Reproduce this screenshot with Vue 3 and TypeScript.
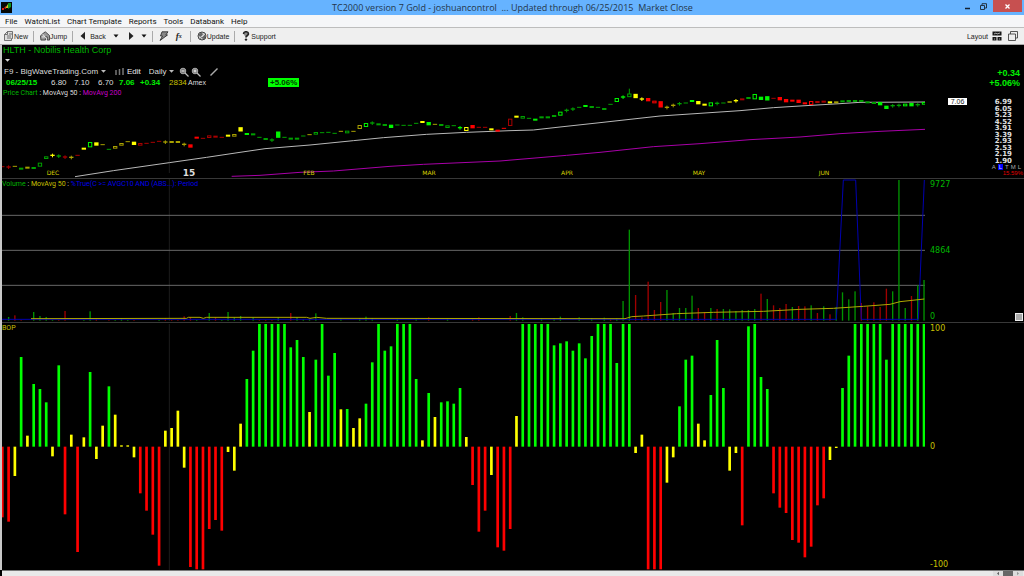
<script setup lang="ts">
interface Candle { x: number; y: number; h: number; w: number; hollow: boolean; wick: number[] | null; color: string }
interface Bar { x: number; y: number; h: number; color: string }

const palette: Record<string, string> = {
  g: '#00f500', G: '#00a000', r: '#ff0000', R: '#a80000', y: '#ffff00', Y: '#a8a000',
}
const barX = (i: number): number => 7 + i * 18.81

const menus = ['File', 'WatchList', 'Chart Template', 'Reports', 'Tools', 'Databank', 'Help']

const candleData =
  'R-245 R+246 Y-244 G=251 Y=248 G=249 GO239 Go218 y+211 G+213 R+216 Y+217 R-211 y=191 gH179 y#177 Y-179 G-193 Yo187 Yo178 ' +
  'Y-170 y#175 Ro178 R-175 R-172 R-169 Y+171 Y=171 Y=171 Y+178 r#183 r=158 R-160 Ro155 R=155 R-157 y=152 Yo151 yM133 g=147 ' +
  'G=148 G-157 G=162 G+165 gB149 G-157 G=161 G=161 G-153 Y-149 Go145 G-143 G-142 G-145 Y-139 Go141 Y-139 YO126 gO120 G+114 ' +
  'G=118 G=120 g#124 G-120 G-121 G-121 G-115 y=111 g#116 Y-118 G=120 Go125 G-122 g+128 yO132 r#125 R-127 R-127 y=133 r=137 ' +
  'r-130 RT112 y=95 Go97 G-100 g=104 G=97 G=97 G=93 gO86 G+76 G+72 G-67 g=63 G=66 G-67 G=72 G-58 gO45 g+36 ' +
  'GW31 yM33 y+42 r#44 ro51 rB58 Y+67 Y+61 G+56 G-54 g=48 y#53 y=59 gO58 G+55 G-54 y-51 y+47 R=43 G=39 ' +
  'gH35 g#40 gM40 R-40 r#41 r#47 r=47 r#49 r=55 rO54 R=51 R=50 y=52 Y=52 G=49 G=48 G=48 G=48 G=52 G=54 ' +
  'g#56 g#67 G+62 G+61 go60 g#59 G+59 go55'

const shapes: Record<string, [number, boolean]> = {
  '-': [3, false], '=': [6, false], '#': [10, false], 'M': [13, false], 'B': [19, false], '+': [4, false],
  'o': [5, true], 'O': [9, true], 'H': [13, true], 'T': [19, true], 'W': [8, true],
}
const candles: Candle[] = candleData.split(' ').map((t, i) => {
  const [h, hollow] = shapes[t[1]]
  const mid = Number(t.slice(2))
  const wick = t[1] === '+' ? [mid - 5, mid + 6] : t[1] === 'W' ? [mid - 20, mid - 4] : null
  const w = hollow ? 10 : 13
  return { x: barX(i) - w / 2, y: mid - h / 2, h, w, hollow, wick, color: palette[t[0]] }
})

const volumeData =
  '1g423 2r418 3r432 5g408 6g420 7g423 8g432 9r432 10r405 13g432 14g406 15r427 17r432 18g432 19g426 20g432 21r432 25g432 26r426 ' +
  '27r432 28r432 29r421 30r424 31g432 33g411 34r424 35g432 36g408 37g424 38g420 40g424 41r432 42r432 43r432 44g424 46r411 47g424 ' +
  '48g430 49g430 50g412 54g428 57g426 58g422 59g426 63g430 66g428 68r424 71g426 75r428 76r424 81r420 82g411 83g424 86g428 88g426 ' +
  '89g422 92g424 94g427 96g425 97r430 98g427 99g375 100g161 101r357 102r424 103r317 104r402 105r378 106g342 107g411 108g396 109g396 ' +
  '110g359 111r396 112r408 113g396 114r399 115g399 116g400 117g405 118g402 119g402 120g399 121r353 122g369 123r388 124r396 ' +
  '125r384 126g393 127r390 128r391 129g388 130r411 131g391 132r415 133g393 134g349 135g370 136g346 137r381 138r391 139r379 ' +
  '140r393 141r338 142g346 143g12 144g396 145r360 146g328 147g312'
const volumes: Bar[] = volumeData.split(' ').map((t) => {
  const m = /^(\d+)([gr])(\d+)$/.exec(t)!
  const top = Number(m[3]) - 9
  return { x: barX(Number(m[1])) - 2, y: top, h: 425 - top, color: m[2] === 'g' ? '#009400' : '#a00000' }
})

const bopData =
  'r592 r605 y468 g111 y347 g192 g207 g247 y409 g136 r583 y344 r696 y352 g156 y417 y317 g199 y284 y376 y376 y412 r520 r572 r644 ' +
  'r737 y332 y324 y272 y443 r741 r748 r748 r627 r600 r632 y396 y452 y311 g177 g92 g12 g12 g12 g12 g12 g82 g60 g111 y276 g119 ' +
  'g12 g167 g99 y268 g267 y324 y295 g251 g127 g12 g92 g79 g12 g12 g12 g177 y361 g219 y291 g247 g244 g251 g204 y351 r495 r635 ' +
  'r572 y465 r682 r692 r627 y288 g12 g12 g12 g12 g12 g76 g70 g64 g92 g70 g115 g48 g12 g12 g12 g129 g12 g12 y399 y344 r748 ' +
  'r748 r748 y488 y412 g259 g119 g107 y311 y361 g225 g60 g204 y452 y399 r616 g19 g12 g171 g207 r520 r563 r579 r660 r668 r712 ' +
  'r680 r556 r535 y420 y384 g204 g107 g12 g12 g12 g12 g12 g119 g12 g12 g12 g12 g12 g12'
const bopBars: Bar[] = bopData.split(' ').map((t, i) => {
  const tip = Number(t.slice(1)) - 9
  const color = { g: '#00ff00', r: '#ff0000', y: '#ffff00' }[t[0]] as string
  return { x: barX(i) - 4, y: Math.min(tip, 371), h: Math.max(3, Math.abs(tip - 371)), color }
})

const months = [
  { label: 'DEC', at: 51 }, { label: '15', at: 187, year: true }, { label: 'FEB', at: 307 }, { label: 'MAR', at: 427 },
  { label: 'APR', at: 565 }, { label: 'MAY', at: 697 }, { label: 'JUN', at: 822 },
]
const scale = ['6.99', '6.05', '5.23', '4.52', '3.91', '3.39', '2.93', '2.53', '2.19', '1.90']
</script>

<template>
  <div class="app">
    <header class="title">
      <svg class="logo" viewBox="0 0 11 11"><rect width="11" height="11" fill="#050805" /><path d="M1 9V6h2v2H1M3 6l2-2v3z" fill="#e02018" /><path d="M5 5l2-3v4H5z" fill="#d8c020" /><path d="M7 1h3v4L7 7z" fill="#109820" /></svg>
      <h1>TC2000 version 7 Gold - joshuancontrol &nbsp;... Updated through 06/25/2015 &nbsp;Market Close</h1>
      <div class="win">
        <button aria-label="Minimize"><svg viewBox="0 0 7 7"><path d="M1 5.500h5" stroke="#123" stroke-width="1.500" /></svg></button>
        <button aria-label="Restore"><svg viewBox="0 0 7 7"><path d="M.5 2.500h4v4h-4zM2 2V.7h4.500V5H5" fill="none" stroke="#234" /></svg></button>
        <button class="close" aria-label="Close"><svg viewBox="0 0 7 7"><path d="M1.500 1.500l4 4M5.500 1.500l-4 4" stroke="#fff" stroke-width="1.300" /></svg></button>
      </div>
    </header>
    <nav class="menu"><button v-for="m in menus" :key="m">{{ m }}</button></nav>
    <div class="tools">
      <button><svg viewBox="0 0 10 10"><path d="M3.500.5h5v7h-1v2h-7v-6zM3.500.5v3h-3M3 5h4M3 7h4M5 3h3" fill="#ddd" stroke="#555" stroke-width=".8" /></svg>New</button>
      <i class="sep"></i>
      <button><svg viewBox="0 0 11 10"><path d="M.5 5L4 1.500l2-1 4.500 4v5H8V6H6v3.500H1z" fill="#999" stroke="#333" stroke-width=".9" /><path d="M3 3l4 5M2 6h3" stroke="#eee" /></svg>Jump</button>
      <i class="sep"></i>
      <button class="back"><svg viewBox="0 0 10 10"><path d="M6 .8v8L1.500 5z" fill="#222" /></svg>Back</button>
      <button class="down" aria-label="Back history"><svg viewBox="0 0 6 6"><path d="M.5 1.500h5L3 4.500z" fill="#111" /></svg></button>
      <button class="down wide" aria-label="Forward"><svg viewBox="0 0 6 8"><path d="M1 0v8l4.500-4z" fill="#222" /></svg></button>
      <button class="down" aria-label="Forward history"><svg viewBox="0 0 6 6"><path d="M.5 1.500h5L3 4.500z" fill="#111" /></svg></button>
      <i class="sep"></i>
      <button aria-label="Alerts"><svg viewBox="0 0 10 10"><path d="M3 .8h6L6.800 4H8.500L1 9.500 3.500 5H1.500z" fill="#888" stroke="#222" stroke-width=".8" /></svg></button>
      <button class="fx" aria-label="Formula"><b>f</b><small>x</small></button>
      <i class="sep"></i>
      <button><svg viewBox="0 0 10 10"><circle cx="5" cy="5" r="4" fill="#ccc" stroke="#444" /><path d="M1.500 4l3-2.500 1 2-2 2zM5 7l3-3v4zM3 8l2-2" fill="#666" stroke="#555" stroke-width=".6" /></svg>Update</button>
      <i class="sep"></i>
      <button><svg viewBox="0 0 8 10"><path d="M1.500 3C1.500 0 6.500 0 6.500 3 6.500 4.500 4 4.500 4 6.500" fill="#888" stroke="#222" stroke-width="1.600" /><circle cx="4" cy="8.600" r="1.200" fill="#222" /></svg>Support</button>
      <div class="layout">
        <button>Layout <svg viewBox="0 0 10 10"><path d="M.5.500h9v4h-9zM.5 6h4v3.500h-4zM5.500 6h4v3.500h-4z" fill="#181818" /><path d="M2 3l2-1 1 1 3-1M2 8h1M7 8h1" stroke="#ccc" stroke-width=".8" fill="none" /></svg></button>
        <button aria-label="Windows"><svg viewBox="0 0 10 10"><path d="M.5 3h7v6.500h-7zM2.500 3V.5h7V7H7.500" fill="#eee" stroke="#444" stroke-width=".9" /></svg></button>
      </div>
    </div>

    <main>
      <section class="panel price">
        <svg class="plot" viewBox="6 -120 2769 399" preserveAspectRatio="none">
          <path d="M508 0V264" stroke="#1c1c1c" stroke-width="3" />
          <polyline class="ma" stroke="#b8b8b8" points="225,275 340,257 508,233 620,217 720,202 795,191 930,180 1060,167 1150,158 1280,148 1400,142 1530,137 1600,135 1680,126 1800,113 1890,103 1980,93 2100,85 2220,77 2320,68 2400,63 2520,56 2580,52 2775,51" />
          <polyline class="ma" stroke="#a800a8" points="695,274 780,271 900,262 1000,258 1170,244 1270,238 1500,228 1700,211 1800,202 1960,185 2100,176 2250,164 2400,156 2520,146 2640,139 2775,133" />
          <template v-for="(c, i) in candles" :key="i">
            <path v-if="c.wick" :d="`M${c.x + c.w / 2} ${c.wick[0]}V${c.wick[1]}`" :stroke="c.color" stroke-width="3" />
            <rect :x="c.x" :y="c.y" :width="c.w" :height="c.h" :fill="c.hollow ? 'none' : c.color" :stroke="c.hollow ? c.color : 'none'" stroke-width="3" />
          </template>
        </svg>
        <div class="info">
          <h2>HLTH - Nobilis Health Corp</h2>
          <button class="caret" aria-label="Symbol menu"><svg viewBox="0 0 5 3"><path d="M0 0h5L2.500 2.800z" fill="#ddd" /></svg></button>
          <div class="controls">
            <select aria-label="Chart template"><option>F9 - BigWaveTrading.Com</option></select>
            <svg class="arrow" viewBox="0 0 5 3"><path d="M0 0h5L2.500 2.800z" fill="#bbb" /></svg>
            <button class="edit"><svg viewBox="0 0 9 7"><path d="M1 2v5M4.500 1v6M8 0v7" stroke="#777" stroke-width="1.500" /></svg>Edit</button>
            <select aria-label="Time frame"><option>Daily</option></select>
            <svg class="arrow" viewBox="0 0 5 3"><path d="M0 0h5L2.500 2.800z" fill="#bbb" /></svg>
            <button class="zoom" aria-label="Zoom out"><svg class="lens" viewBox="0 0 10 10"><circle cx="4" cy="4" r="2.800" fill="#777" stroke="#aaa" /><path d="M2.500 4h3" stroke="#eee" /><path d="M6 6l3.500 3.500" stroke="#bbb" stroke-width="1.300" /></svg></button>
            <button class="zoomin" aria-label="Zoom in"><svg class="lens" viewBox="0 0 10 10"><circle cx="4" cy="4" r="2.800" fill="#777" stroke="#aaa" /><path d="M2.500 4h3M4 2.500v3" stroke="#eee" /><path d="M6 6l3.500 3.500" stroke="#bbb" stroke-width="1.300" /></svg></button>
            <button class="pen" aria-label="Draw line"><svg class="lens" viewBox="0 0 10 10"><path d="M1.500 8.500L8.500 1.500" stroke="#aaa" stroke-width="1.500" /></svg></button>
          </div>
          <div class="quote">
            <b>06/25/15</b><span>6.80</span><span>7.10</span><span>6.70</span><b>7.06</b><b>+0.34</b><span class="yel">2834</span><span class="amex">Amex</span><mark>+5.06%</mark>
          </div>
          <p class="legend"><span class="grn">Price Chart</span> : MovAvg 50 : <span class="mag">MovAvg 200</span></p>
        </div>
        <div class="months">
          <span v-for="m in months" :key="m.label" :class="{ year: m.year }" :style="{ left: (m.at / 9.23) + '%' }">{{ m.label }}</span>
        </div>
        <aside class="axis">
          <div class="change"><b>+0.34</b><b>+5.06%</b></div>
          <span class="last">7.06</span>
          <ol class="scale"><li v-for="s in scale" :key="s">{{ s }}</li></ol>
          <div class="modes"><button>A</button><button class="on">L</button><button>T</button><button>M</button><button>L</button></div>
          <span class="pct">15.59%</span>
        </aside>
      </section>

      <section class="panel volume">
        <svg class="plot" viewBox="6 0 2769 429" preserveAspectRatio="none">
          <path d="M508 0V426" stroke="#1c1c1c" stroke-width="3" />
          <path d="M6 109H2775M6 214H2775M6 319H2775" stroke="#686868" stroke-width="3" />
          <rect v-for="(v, i) in volumes" :key="i" :x="v.x" :y="v.y" width="4" :height="v.h" :fill="v.color" />
          <polyline class="ma" stroke="#0000b0" points="6,421 2509,421 2530,3 2567,3 2584,421 2755,421 2773,3" />
          <polyline class="ma" stroke="#b0a800" points="93,419 560,418 565,415 600,415 610,418 620,415 920,415 930,418 950,415 980,418 1800,419 1875,419 1895,413 1930,411 2030,404 2140,400 2290,397 2400,391 2500,388 2590,382 2670,376 2700,368 2773,360" />
        </svg>
        <p class="legend over"><span class="grn">Volume</span> : <span class="yel">MovAvg 50</span> : <span class="blu">%True(C &gt;= AVGC10 AND (ABS...): Period</span></p>
        <aside class="axis spread grn"><span>9727</span><span>4864</span><span>0</span></aside>
        <button class="knob" aria-label="Resize panel"></button>
      </section>

      <section class="panel bop">
        <svg class="plot" viewBox="6 0 2769 741" preserveAspectRatio="none">
          <path d="M508 3V741" stroke="#1c1c1c" stroke-width="3" />
          <rect v-for="(b, i) in bopBars" :key="i" :x="b.x" :y="b.y" width="8" :height="b.h" :fill="b.color" />
        </svg>
        <p class="legend over yel">BOP</p>
        <aside class="axis spread yel"><span>100</span><span>0</span><span>-100</span></aside>
      </section>
    </main>
    <footer>
      <button aria-label="Scroll left"><svg viewBox="0 0 8 6"><path d="M5 1v4L3 3z" fill="#444" /></svg></button>
      <i class="thumb"></i>
      <button aria-label="Scroll right"><svg viewBox="0 0 8 6"><path d="M3 1v4l2-2z" fill="#888" /></svg></button>
    </footer>
  </div>
</template>

<style>
body { background: #000; }
</style>

<style scoped>
* { box-sizing: border-box; margin: 0; padding: 0; }
.app { display: flex; flex-direction: column; height: 100vh; overflow: hidden; font-family: "Liberation Sans", Arial, sans-serif; font-size: 8px; color: #ddd; background: #000; }
button, select { font: inherit; color: inherit; background: none; border: 0; display: flex; align-items: center; white-space: nowrap; }
select { appearance: none; }
svg { display: block; }
.title { display: grid; grid-template-columns: 1fr auto 1fr; align-items: center; height: 15px; padding-left: 1px; background: #66b3ff; }
.logo { width: 11px; height: 11px; }
h1 { font: 9px "Open Sans", "Noto Sans", sans-serif; line-height: 15px; color: #24364a; white-space: nowrap; }
.win { display: flex; justify-content: flex-end; align-self: start; gap: 4px; padding-right: 2px; }
.win button { width: 12px; height: 12px; justify-content: center; }
.win svg { width: 7px; height: 7px; }
.win .close { width: 29px; background: #c75050; }
.menu { display: flex; gap: 7px; height: 12px; padding-left: 5px; background: #f5f6f8; font: 8px Roboto, "Noto Sans", sans-serif; color: #111; }
.tools { display: flex; align-items: center; height: 18px; padding: 0 6px 0 4px; background: #efefef; border-top: 1px solid #bdbdbd; border-bottom: 1px solid #aaa; font-size: 7px; color: #222; }
.tools svg { height: 10px; width: 10px; }
.sep { width: 1px; height: 11px; margin: 0 6px 0 5px; background: #aaa; }
.tools .back { gap: 1px; }
.tools .down { margin-left: 7px; }
.tools .wide { margin-left: 9px; }
.tools .down svg { width: 6px; height: 8px; }
.tools .fx { margin: 0 3px 0 7px; font: italic bold 9px "Liberation Serif", serif; }
.fx small { font-size: 6px; }
.layout { margin-left: auto; display: flex; gap: 6px; }
.layout button { gap: 4px; }
main { flex: 1; display: flex; flex-direction: column; min-height: 0; padding-left: 2px; background: linear-gradient(90deg, #c8c8c8 2px, #000 2px); }
.panel { position: relative; display: grid; grid-template-columns: minmax(0, 1fr) 99px; grid-template-rows: minmax(0, 1fr); min-height: 0; }
.price { flex: 133 1 0; border-bottom: 1px solid #383838; }
.volume { flex: 143 1 0; border-bottom: 1px solid #383838; }
.bop { flex: 247 1 0; }
.plot { grid-area: 1 / 1; width: 100%; height: 100%; overflow: hidden; }
.ma { fill: none; stroke-width: 3; }
.info { grid-area: 1 / 1; align-self: start; padding-left: 1px; }
h2 { font-size: 9px; font-weight: 400; line-height: 11px; color: #00b400; }
.caret { height: 9px; padding-left: 2px; }
.caret svg, .arrow { width: 5px; height: 3px; }
.controls { display: flex; align-items: center; height: 13px; padding-left: 1px; }
.arrow { margin-left: 2px; }
.edit { gap: 3px; margin: 0 8px 0 9px; color: #eee; }
.edit svg { width: 9px; height: 7px; }
.lens { width: 10px; height: 10px; }
.zoom { margin-left: 5px; }
.zoomin { margin-left: 2px; }
.pen { margin-left: 8px; }
.quote { display: grid; grid-template-columns: 45px 23px 24px 21px 21px 29px 19px 80px auto; justify-content: start; height: 10px; line-height: 10px; padding-left: 3px; }
.quote b, .change { color: #00f000; }
.amex { font-size: 7px; }
mark { background: #00ff00; color: #003800; padding: 0 2px; line-height: 9px; height: 9px; font-weight: 700; }
.legend { font: 7px Roboto, "Noto Sans", sans-serif; line-height: 10px; color: #ddd; white-space: pre; }
.over { grid-area: 1 / 1; align-self: start; }
.grn { color: #00b800; }
.yel { color: #c8c000; }
.mag { color: #c800c8; }
.blu { color: #0000e8; }
.months { grid-area: 1 / 1; position: relative; align-self: end; height: 10px; }
.months span { position: absolute; transform: translateX(-50%); font: 6px "DejaVu Sans", sans-serif; line-height: 10px; color: #d8d000; }
.months .year { font-weight: 700; font-size: 9px; color: #ddd; }
.axis { grid-area: 1 / 2; position: relative; display: flex; flex-direction: column; min-height: 0; }
.change { display: flex; flex-direction: column; align-items: flex-end; padding: 23px 4px 0 0; line-height: 10px; font-size: 9px; }
.last { position: absolute; left: 23px; top: 53px; width: 19px; text-align: center; font-size: 7px; line-height: 7px; color: #222; background: #fff; }
.scale { flex: 1; min-height: 0; display: flex; flex-direction: column; align-self: flex-end; list-style: none; margin-top: 11px; padding-right: 12px; font: bold 7px "DejaVu Sans", sans-serif; color: #e0e0e0; }
.scale li { flex: 1; line-height: 6px; min-height: 0; }
.modes { display: flex; justify-content: flex-end; gap: 2px; padding-right: 3px; font-size: 6px; line-height: 6px; color: #aaa; height: 6px; }
.modes .on { background: #0000ff; color: #ccf; padding: 0 1px; }
.pct { font-size: 6px; line-height: 7px; text-align: right; color: #e00000; padding: 0 1px 1px 0; }
.spread { justify-content: space-between; padding: 1px 0 0 5px; font: 8px "DejaVu Sans", "Noto Sans", sans-serif; line-height: 10px; }
.knob { position: absolute; right: 1px; bottom: 1px; width: 8px; height: 8px; background: #aaa; border: 1px solid #eee; }
footer { display: flex; justify-content: flex-end; height: 6px; margin-left: 2px; padding-right: 1px; background: #e9e9e9; border-top: 1px solid #777; }
footer button { width: 10px; background: #ddd; justify-content: center; }
footer svg { width: 8px; height: 5px; }
.thumb { width: 10px; background: #666; }
</style>
